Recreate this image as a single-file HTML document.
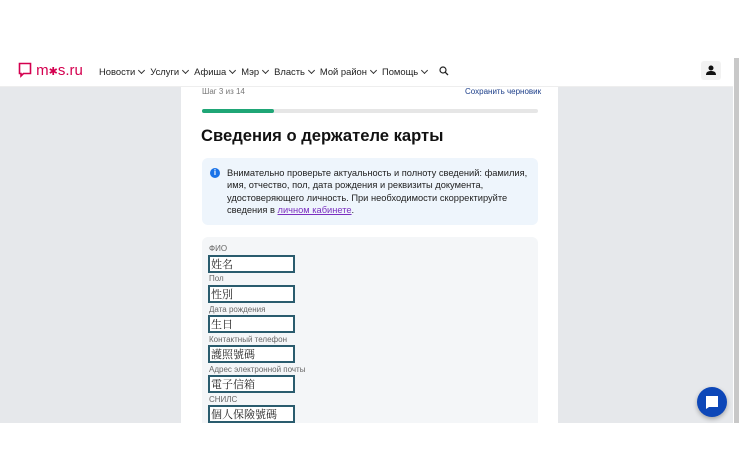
<!DOCTYPE html>
<html><head><meta charset="utf-8"><style>
*{margin:0;padding:0;box-sizing:border-box}
body{width:740px;height:463px;overflow:hidden;background:#fff;font-family:"Liberation Sans",sans-serif;position:relative}
.hdr{position:absolute;left:0;top:50px;width:733px;height:37px;background:#fff;border-bottom:1px solid #eee}
.gray{position:absolute;left:0;top:87px;width:733px;height:336px;background:#e6e8eb}
.sb{position:absolute;left:734px;top:58px;width:5px;height:365px;background:#c8c8c8}
.card{position:absolute;left:181px;top:87px;width:377px;height:336px;background:#fff}
.logo{position:absolute;left:18px;top:62px;color:#d4004f;font-size:15px}
.nav{position:absolute;left:99px;top:66px;font-size:9.4px;color:#222;white-space:nowrap}
.nav span{margin-right:6px}
.nav span:after{content:"";display:inline-block;width:4px;height:4px;border-right:1px solid #333;border-bottom:1px solid #333;transform:rotate(45deg);margin-left:4px;position:relative;top:-2px}
.lbl{font-size:8px;color:#666;position:absolute;left:209px}
.inp{position:absolute;left:208px;width:87px;height:18px;border:2px solid #2a5c6e;background:#fff;font-family:"Noto Serif CJK SC",serif;font-size:11px;line-height:14px;padding-left:1px;color:#222}
</style></head><body>
<div class="hdr"></div>
<div class="gray"></div>
<div class="sb"></div>
<div class="logo"><svg width="14" height="16" viewBox="0 0 14 16" style="vertical-align:-3px"><path d="M1.5 1.5h11v10h-7l-2.5 2.5v-2.5h-1.5z" fill="none" stroke="#d4004f" stroke-width="1.6"/></svg> m<span style="font-size:11px">✱</span>s.ru</div>
<div class="nav"><span>Новости</span><span>Услуги</span><span>Афиша</span><span>Мэр</span><span>Власть</span><span>Мой район</span><span>Помощь</span>
<svg width="10" height="10" viewBox="0 0 10 10" style="vertical-align:-1px;margin-left:3px"><circle cx="4" cy="4" r="3" fill="none" stroke="#222" stroke-width="1.2"/><path d="M6.2 6.2L9 9" stroke="#222" stroke-width="1.3"/></svg></div>
<div style="position:absolute;left:701px;top:61px;width:20px;height:19px;background:#f2f2f2;border-radius:3px"><svg width="20" height="19" viewBox="0 0 20 19"><circle cx="10" cy="7" r="2.5" fill="#111"/><path d="M5 14c0-3 2-4 5-4s5 1 5 4z" fill="#111"/></svg></div>
<div class="card"></div>
<div style="position:absolute;left:202px;top:87px;font-size:8px;color:#777">Шаг 3 из 14</div>
<div style="position:absolute;left:465px;top:87px;font-size:8px;color:#1d3f8a">Сохранить черновик</div>
<div style="position:absolute;left:202px;top:109px;width:336px;height:4px;background:#e6e6e6;border-radius:2px"><div style="width:72px;height:4px;background:#1fa676;border-radius:2px"></div></div>
<div style="position:absolute;left:201px;top:126px;font-size:16.6px;font-weight:bold;color:#111">Сведения о держателе карты</div>
<div style="position:absolute;left:202px;top:158px;width:336px;height:67px;background:#eef5fc;border-radius:6px"></div>
<div style="position:absolute;left:210px;top:168px;width:10px;height:10px;border-radius:50%;background:#1a73e8;color:#fff;font-size:8px;font-weight:bold;text-align:center;line-height:10px">i</div>
<div style="position:absolute;left:227px;top:167px;font-size:9.3px;line-height:12.3px;color:#222;width:302px">Внимательно проверьте актуальность и полноту сведений: фамилия, имя, отчество, пол, дата рождения и реквизиты документа, удостоверяющего личность. При необходимости скорректируйте сведения в <span style="color:#7b2fbf;text-decoration:underline">личном кабинете</span>.</div>
<div style="position:absolute;left:202px;top:237px;width:336px;height:186px;background:#f4f6f8;border-radius:6px 6px 0 0"></div>
<div class="lbl" style="top:244px">ФИО</div><div class="inp" style="top:255px">姓名</div>
<div class="lbl" style="top:274px">Пол</div><div class="inp" style="top:285px">性別</div>
<div class="lbl" style="top:305px">Дата рождения</div><div class="inp" style="top:315px">生日</div>
<div class="lbl" style="top:335px">Контактный телефон</div><div class="inp" style="top:345px">護照號碼</div>
<div class="lbl" style="top:365px">Адрес электронной почты</div><div class="inp" style="top:375px">電子信箱</div>
<div class="lbl" style="top:395px">СНИЛС</div><div class="inp" style="top:405px">個人保險號碼</div>
<div style="position:absolute;left:697px;top:387px;width:30px;height:30px;border-radius:50%;background:#0d47b8;box-shadow:0 2px 5px rgba(0,0,0,.3)"><svg width="30" height="30" viewBox="0 0 30 30"><path d="M9 9h12v11h-9l-3 2z" fill="#fff"/></svg></div>
</body></html>
